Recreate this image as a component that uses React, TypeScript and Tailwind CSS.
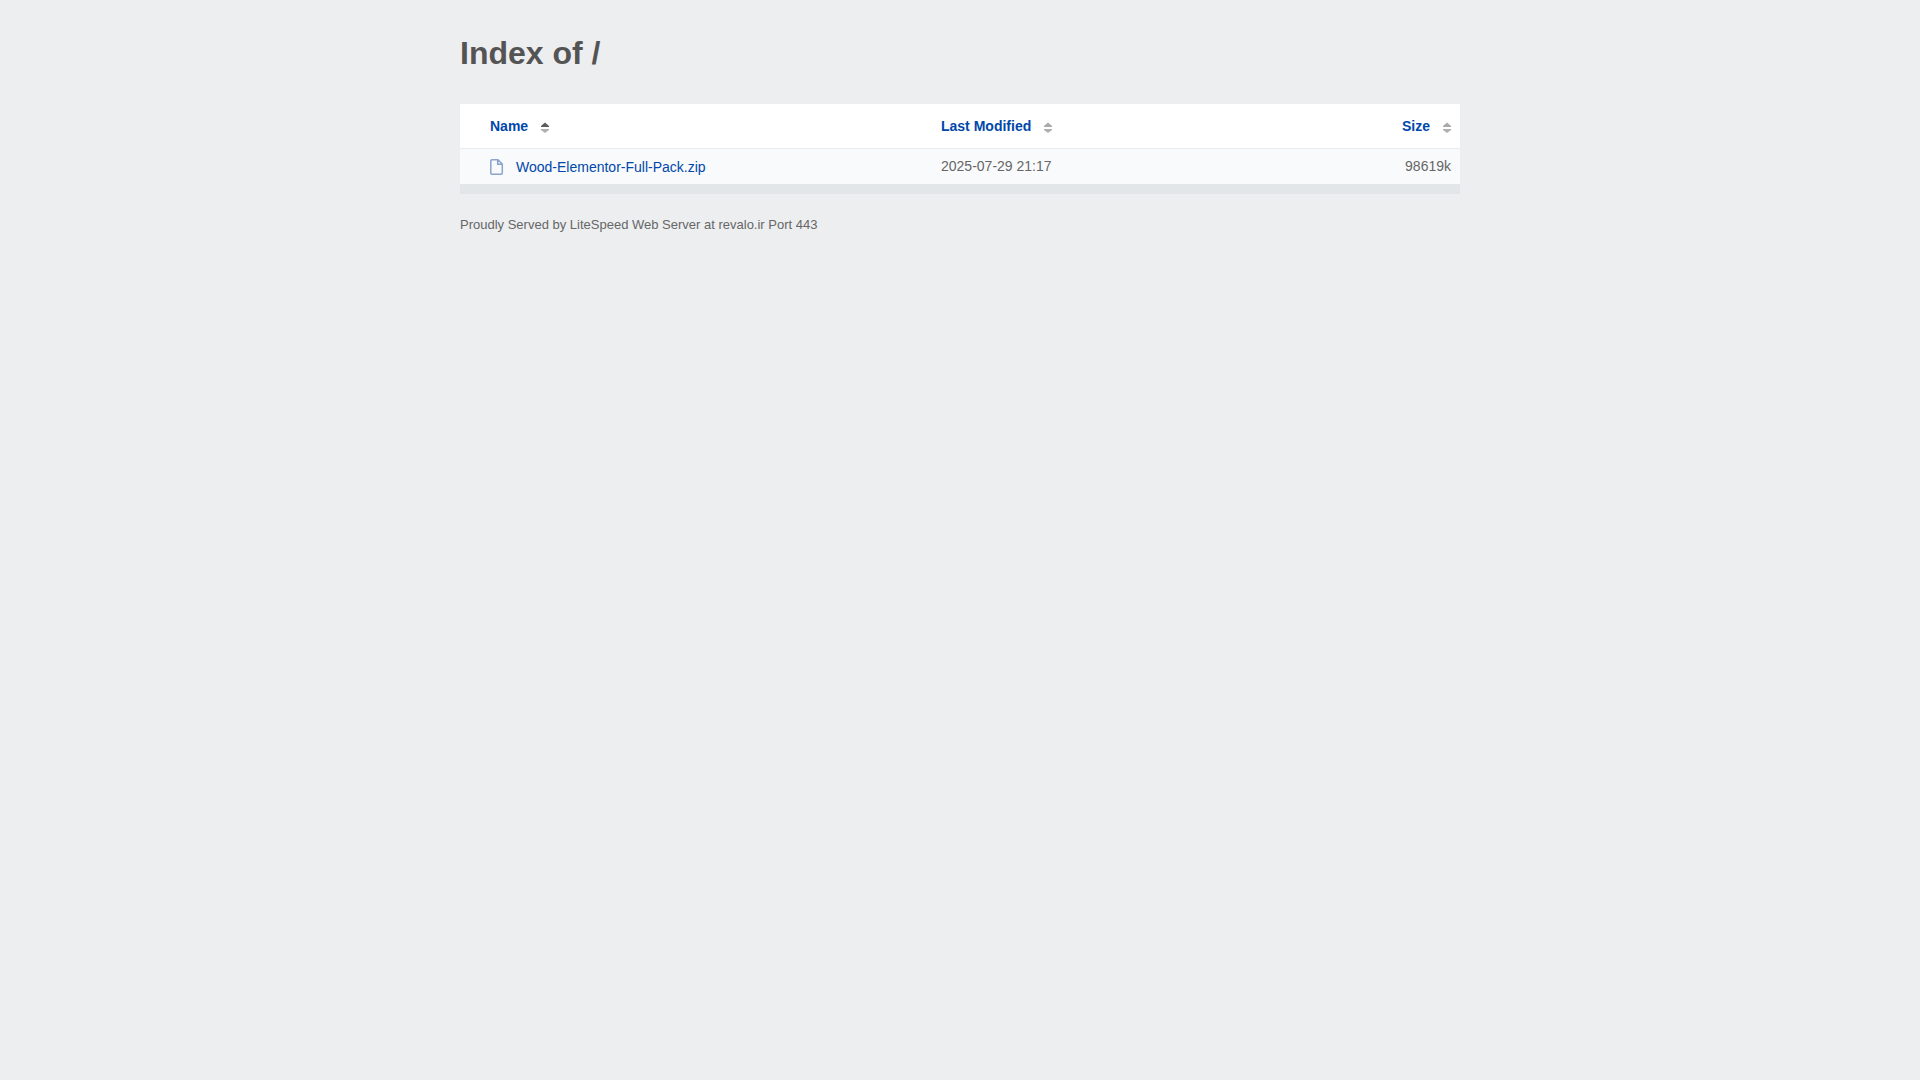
const files = [
  { name: "Wood-Elementor-Full-Pack.zip", modified: "2025-07-29 21:17", size: "98619k" },
];

function SortArrows({ active = false }: { active?: boolean }) {
  return (
    <svg className="ml-[13px] inline-block align-middle" width="8" height="12" viewBox="0 0 8 12" aria-hidden="true">
      <path d="M0 6 V5 L4 1.5 L8 5 V6 Z" fill={active ? "#5c5c5c" : "#aaaaaa"} />
      <path d="M0 8 V9 L4 12 L8 9 V8 Z" fill="#b0b0b0" />
    </svg>
  );
}

function FileIcon() {
  return (
    <svg className="mr-3 shrink-0" width="14" height="16" viewBox="0 0 14 16" fill="none" stroke="#8aa4cc" strokeWidth="1.5" aria-hidden="true">
      <path d="M2 0.8 H8 L12.3 5 V14 Q12.3 15.2 11 15.2 H2 Q0.8 15.2 0.8 14 V2 Q0.8 0.8 2 0.8 Z M7.7 0.8 V5.3 H12.3" />
    </svg>
  );
}

export default function App() {
  return (
    <div className="min-h-screen bg-[#edeef0] px-8 pt-[33px] font-['Liberation_Sans',Arial,sans-serif] text-sm text-[#545454]">
      <main className="mx-auto max-w-[1000px]">
        <h1 className="mb-[31px] text-[32px] leading-10 font-bold">Index of /</h1>
        <div className="border-b-10 border-[#e3e6e9]">
          <table className="w-full table-fixed border-separate border-spacing-0 bg-white">
            <thead>
              <tr className="h-11 text-left text-[#0047ab]">
                <th className="w-[48%] pl-[30px]"><a href="#name">Name<SortArrows active /></a></th>
                <th className="pl-px"><a href="#modified">Last Modified<SortArrows /></a></th>
                <th className="pr-[9px] text-right"><a href="#size">Size<SortArrows /></a></th>
              </tr>
            </thead>
            <tbody className="text-[#666666]">
              {files.map((file) => (
                <tr key={file.name} className="h-9 bg-[#f9fafc]">
                  <td className="border-t border-[#e9ebed] pl-[30px]">
                    <a href="#file" className="flex items-center text-[#0047ab]"><FileIcon />{file.name}</a>
                  </td>
                  <td className="border-t border-[#e9ebed] pb-0.5 pl-px">{file.modified}</td>
                  <td className="border-t border-[#e9ebed] pr-[9px] pb-0.5 text-right">{file.size}</td>
                </tr>
              ))}
            </tbody>
          </table>
        </div>
        <footer className="mt-[22px] text-[13px] text-[#666666]">
          Proudly Served by LiteSpeed Web Server at revalo.ir Port 443
        </footer>
      </main>
    </div>
  );
}
